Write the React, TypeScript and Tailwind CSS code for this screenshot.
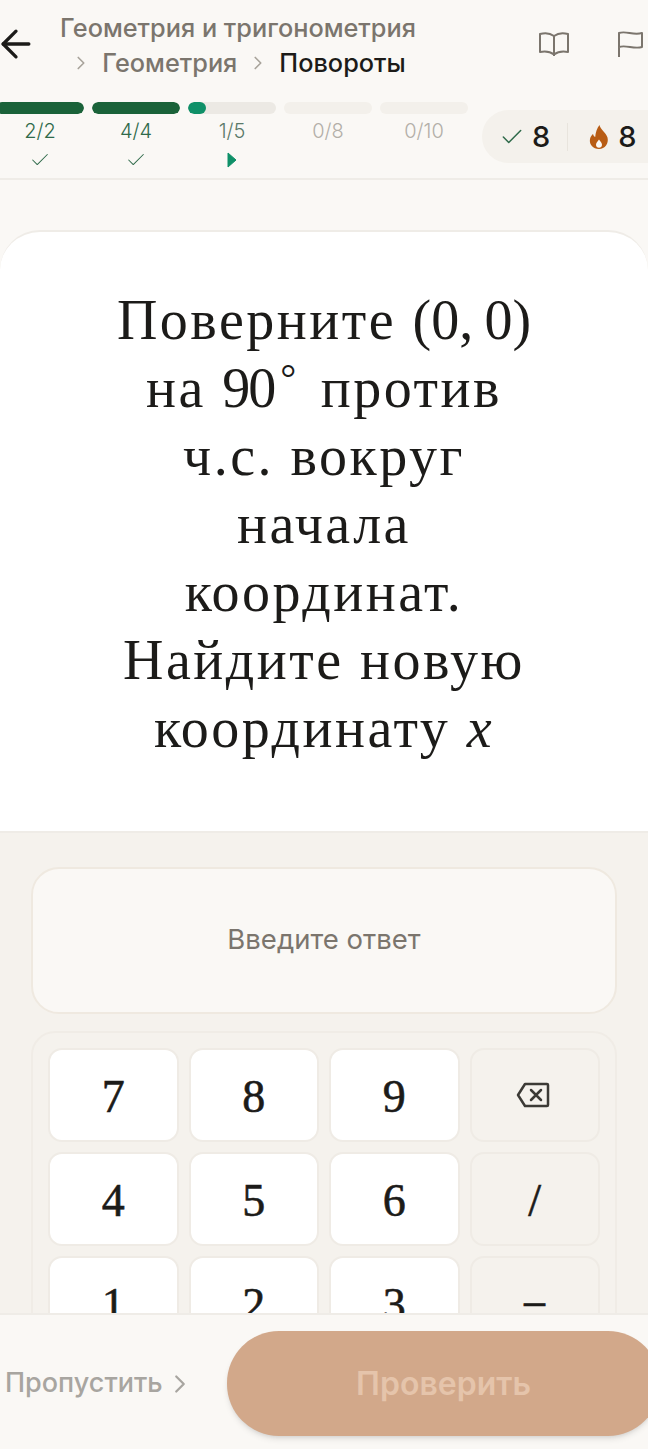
import React from "react";
import { ArrowLeft, Check, ChevronRight } from "lucide-react";

const SANS = "font-['Inter',sans-serif]";
const SERIF = "font-['Liberation_Serif',serif]";

const steps = [
  { label: "2/2", fill: "done" },
  { label: "4/4", fill: "done" },
  { label: "1/5", fill: "current" },
  { label: "0/8", fill: "none" },
  { label: "0/10", fill: "none" },
];

function Flame() {
  return (
    <svg width="20" height="26" viewBox="0 0 20 26" className="block">
      <path
        d="M10.500 1c.6 4 6.500 7.500 8 12.500C20 19.500 16 25 10 25S0 20.500 1 15c.5-2.500 2-4 3-5 .5 1.500 1 2.500 2.200 3C6.500 8.500 8 4 10.500 1z"
        fill="#b85c14"
      />
      <path d="M10 15.500c1.500 2 3 3.500 3 5.300 0 1.700-1.300 3-3 3s-3-1.300-3-3c0-1.800 1.500-3.300 3-5.300z" fill="#faf8f5" />
    </svg>
  );
}

function Key({ label, side, children }: { label?: string; side?: boolean; children?: React.ReactNode }) {
  return (
    <div
      className={`h-[94px] rounded-[14px] border-2 border-[#efebe5] flex items-center justify-center text-[46px] text-[#1c1b19] [-webkit-text-stroke:0.6px_#1c1b19] ${SERIF} ${
        side ? "bg-[#f5f2ed]" : "bg-white pt-[3px]"
      } ${label === "/" || label === "−" ? "pt-[2px]" : ""}`}
    >
      {label}
      {children}
    </div>
  );
}

export default function App() {
  return (
    <div className={`h-[1449px] w-[648px] overflow-hidden flex flex-col bg-[#f5f2ed] ${SANS}`}>
      {/* header */}
      <header className="h-[180px] shrink-0 bg-[#faf8f5] border-b-2 border-[#efece7] overflow-hidden">
        <div className="flex items-start h-[102px]">
          <ArrowLeft className="w-[44px] h-[44px] shrink-0 mt-[22px] -ml-[6px] text-[#1c1b19]" strokeWidth={1.8} />
          <div className="w-[380px] shrink-0 ml-[10px] mt-[10px] text-center text-[25.3px] leading-[35px] font-medium text-[#7b756d]">
            <div className="whitespace-nowrap">Геометрия и тригонометрия</div>
            <div className="whitespace-nowrap flex items-center justify-center">
              <ChevronRight className="w-[22px] h-[22px] text-[#a8a39b] mr-[10px]" strokeWidth={1.8} />
              Геометрия
              <ChevronRight className="w-[22px] h-[22px] text-[#a8a39b] mx-[10px]" strokeWidth={1.8} />
              <span className="text-[#1c1b19]">Повороты</span>
            </div>
          </div>
          <svg width="30" height="26" viewBox="0 0 30 26" fill="none" stroke="#7b756d" strokeWidth="2" strokeLinejoin="round" className="shrink-0 mt-[31px] ml-[111px]">
            <path d="M1 3c5-1.500 10-1 14 2 4-3 9-3.500 14-2v18c-5-1-10-.5-14 2.500-4-3-9-3.500-14-2.500z" />
            <path d="M15 5v20" />
          </svg>
          <svg width="26" height="28" viewBox="0 0 26 28" fill="none" stroke="#7b756d" strokeWidth="2" strokeLinejoin="round" className="shrink-0 mt-[30px] ml-[48px]">
            <path d="M2 27V3c7-2.500 14 2.500 23 0v14c-8 2.500-16-2.500-23 0" />
          </svg>
        </div>
        <div className="flex justify-between">
          <div className="flex gap-2 -ml-1">
            {steps.map((s) => (
              <div key={s.label} className="w-[88px] flex flex-col items-center">
                <div className={`w-full h-[12px] rounded-full overflow-hidden ${s.fill === "current" ? "bg-[#ece9e4]" : "bg-[#f3f0eb]"}`}>
                  {s.fill === "done" && <div className="h-full w-full rounded-full bg-[#1a6239]" />}
                  {s.fill === "current" && <div className="h-full w-[18px] rounded-full bg-[#0f9068]" />}
                </div>
                <div
                  className={`mt-[3px] text-[20px] leading-[28px] font-light ${
                    s.fill === "done" ? "text-[#2f6a4a]" : s.fill === "current" ? "text-[#5b7a6a]" : "text-[#b3afa8]"
                  }`}
                >
                  {s.label}
                </div>
                {s.fill === "done" && <Check className="w-[22px] h-[22px] mt-[4px] text-[#2f6a4a]" strokeWidth={1.1} />}
                {s.fill === "current" && (
                  <svg width="10" height="16" viewBox="0 0 10 16" className="mt-[7px]">
                    <path d="M1 1l8 7-8 7z" fill="#0f9068" stroke="#0f9068" strokeLinejoin="round" />
                  </svg>
                )}
              </div>
            ))}
          </div>
          <div className="mt-2 -mr-[4px] h-[53px] w-[170px] shrink-0 rounded-l-[27px] bg-[#f4f1ec] flex items-center pl-[18px]">
            <Check className="w-[26px] h-[26px] -ml-px text-[#2f6a4a]" strokeWidth={1.4} />
            <span className="ml-[7px] text-[29px] font-medium text-[#1c1b19]">8</span>
            <div className="ml-[17px] w-px h-[28px] bg-[#e8e4dd]" />
            <span className="ml-[21px]"><Flame /></span>
            <span className="ml-[9px] text-[29px] font-medium text-[#1c1b19]">8</span>
          </div>
        </div>
      </header>

      <main className="flex-1 min-h-0 overflow-hidden">
        <div className="h-[50px] bg-[#faf8f5]" />
        {/* question card */}
        <div className="bg-[#faf8f5]">
          <section
            className={`h-[603px] rounded-t-[40px] bg-white border-y-2 border-[#efece7] pt-[54px] px-[110px] text-center text-[56px] leading-[68px] tracking-[2.5px] text-[#1c1b19] ${SERIF}`}
          >
            Поверните <span className="tracking-normal">(0,&thinsp;0)</span> на <span className="tracking-[-2px]">90</span><span className="text-[40px] leading-none align-[15px] ml-[6px] mr-[8px] tracking-normal">°</span> против ч.с. вокруг начала координат. Найдите новую координату <i>x</i>
          </section>
        </div>

        <div className="px-[31px] pt-[34px]">
          <div className="h-[147px] rounded-[28px] border-2 border-[#efe9e0] bg-[#faf8f5] flex items-center justify-center pb-[2px] text-[27.5px] text-[#7b756d]">
            Введите ответ
          </div>
          <div className="mt-[17px] rounded-[24px] border-2 border-[#f0ece6] p-[15px] grid grid-cols-4 gap-[10px]">
            <Key label="7" />
            <Key label="8" />
            <Key label="9" />
            <Key side>
              <svg width="34" height="26" viewBox="0 0 34 26" fill="none" stroke="#3c3a36" strokeWidth="2.500" className="-ml-[3px]">
                <path d="M9 2h22a1 1 0 0 1 1 1v20a1 1 0 0 1-1 1H9L2 13z" strokeLinejoin="round" />
                <path d="M15 8l10 10M25 8L15 18" strokeLinecap="round" />
              </svg>
            </Key>
            <Key label="4" />
            <Key label="5" />
            <Key label="6" />
            <Key label="/" side />
            <Key label="1" />
            <Key label="2" />
            <Key label="3" />
            <Key label="−" side />
          </div>
        </div>
      </main>

      {/* bottom bar */}
      <footer className="h-[136px] shrink-0 bg-[#faf8f5] border-t-2 border-[#efece7] flex items-center pt-[3px] pl-[5px] overflow-hidden">
        <div className="w-[222px] shrink-0 flex items-center text-[27px] font-medium text-[#a8a5a0]">
          Пропустить
          <ChevronRight className="w-[30px] h-[30px] ml-[2px]" strokeWidth={1.8} />
        </div>
        <div className="h-[105px] w-[433px] shrink-0 rounded-[52px] bg-[#d2a88a] flex items-center justify-center text-[32px] font-semibold text-[#e5c4ab] shadow-md">
          Проверить
        </div>
      </footer>
    </div>
  );
}
